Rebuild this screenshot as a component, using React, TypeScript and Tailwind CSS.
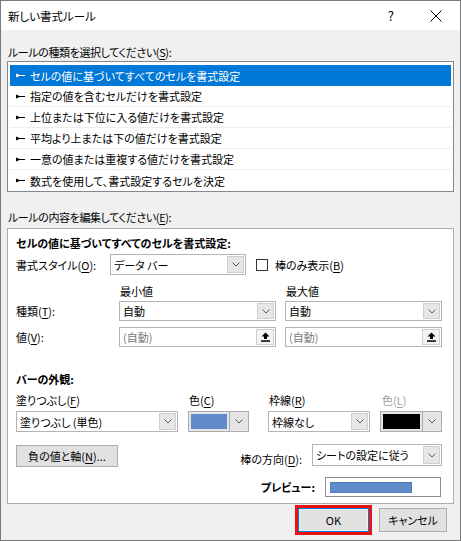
import type { ReactNode } from "react";

const rules = [
  "セルの値に基づいてすべてのセルを書式設定",
  "指定の値を含むセルだけを書式設定",
  "上位または下位に入る値だけを書式設定",
  "平均より上または下の値だけを書式設定",
  "一意の値または重複する値だけを書式設定",
  "数式を使用して、書式設定するセルを決定",
];

function Key({ k }: { k: string }) {
  return <span className="underline underline-offset-2">{k}</span>;
}

function Bullet({ white }: { white?: boolean }) {
  return (
    <svg width="9" height="5" viewBox="0 0 9 5" className="shrink-0">
      <path
        d="M0 0.5 L3.5 2 H9 V3 H3.5 L0 4.5 Z"
        fill={white ? "#ffffff" : "#000000"}
      />
    </svg>
  );
}

function Chevron() {
  return (
    <svg width="8" height="5" viewBox="0 0 8 5">
      <path d="M0.5 0.5 L4 4 L7.5 0.5" fill="none" stroke="#5a5a5a" strokeWidth="1" />
    </svg>
  );
}

function ArrowBox() {
  return (
    <div className="ml-auto my-[1px] mr-[1px] flex w-[17px] shrink-0 items-center justify-center border border-[#cfcfcf] bg-[#e6e6e6]">
      <Chevron />
    </div>
  );
}

function Dropdown({ w, h, children }: { w: string; h: string; children: ReactNode }) {
  return (
    <div className={`flex ${w} ${h} shrink-0 border border-[#b4b4b4] bg-white`}>
      <div className="flex items-center overflow-hidden whitespace-nowrap pl-[3px] leading-[16px]">
        {children}
      </div>
      <ArrowBox />
    </div>
  );
}

function ColorPick({ w, color }: { w: string; color: string }) {
  return (
    <div className={`flex ${w} h-[21px] shrink-0 border border-[#adadad] bg-[#e5e5e5]`}>
      <div className="flex-1 p-[2px]">
        <div className="h-full w-full" style={{ background: color }} />
      </div>
      <div className="flex w-[19px] items-center justify-center border-l border-[#adadad]">
        <Chevron />
      </div>
    </div>
  );
}

function RefInput() {
  return (
    <div className="flex h-[20px] w-[157px] shrink-0 border border-[#b4b4b4] bg-white">
      <div className="flex items-center pl-[3px] leading-[16px] text-[#7a7a7a]">(自動)</div>
      <div className="ml-auto my-[1px] mr-[1px] flex w-[18px] items-center justify-center border border-[#cfcfcf] bg-[#f3f3f3]">
        <svg width="9" height="10" viewBox="0 0 9 10">
          <path d="M4.5 0.5 L8.5 4.5 H6 V7 H3 V4.5 H0.5 Z" fill="#000" />
          <rect x="0" y="8.3" width="9" height="1.5" fill="#000" />
        </svg>
      </div>
    </div>
  );
}

export default function App() {
  return (
    <div className="flex h-[541px] w-[461px] flex-col border border-[#7a7a7a] bg-[#f0f0f0] text-[11px] leading-[16px] text-black [font-family:'Noto_Sans_CJK_JP',sans-serif] [font-feature-settings:'palt']">
      {/* Title bar */}
      <div className="flex h-[29px] shrink-0 items-center bg-white pl-[7px] pr-[18px]">
        <span className="pt-[1px] text-[11.5px]">新しい書式ルール</span>
        <span className="ml-auto text-[13px]">?</span>
        <svg width="12" height="12" viewBox="0 0 12 12" className="ml-[36px]">
          <path d="M0.5 0.5 L11.5 11.5 M11.5 0.5 L0.5 11.5" stroke="#000" strokeWidth="1" />
        </svg>
      </div>

      {/* Body */}
      <div className="flex flex-col px-[6px] pt-[14px]">
        <div className="pl-[1px] tracking-[-0.4px]">
          ルールの種類を選択してください(<Key k="S" />):
        </div>

        <div className="mt-[1px] h-[131px] border border-[#828790] bg-white px-[2px] pt-[3px]">
          {rules.map((r, i) => (
            <div
              key={r}
              className={`flex h-[21px] items-center gap-[5px] pl-[6px] ${
                i === 0
                  ? "bg-[#0078d7] text-white"
                  : i < rules.length - 1
                  ? "border-b border-[#ededed]"
                  : ""
              }`}
            >
              <Bullet white={i === 0} />
              <span>{r}</span>
            </div>
          ))}
        </div>

        <div className="mt-[17px] pl-[1px] tracking-[-0.4px]">
          ルールの内容を編集してください(<Key k="E" />):
        </div>

        {/* Edit panel */}
        <div className="mt-[3px] flex h-[276px] flex-col border border-[#adadad] bg-white pl-[8px] pt-[6px]">
          <div className="font-bold">セルの値に基づいてすべてのセルを書式設定:</div>

          <div className="mt-[3px] flex items-center">
            <span className="w-[94px] shrink-0">
              書式スタイル(<Key k="O" />):
            </span>
            <Dropdown w="w-[136px]" h="h-[21px]">
              データ バー
            </Dropdown>
            <div className="ml-[10px] h-[12px] w-[12px] shrink-0 border border-[#333333] bg-white" />
            <span className="ml-[7px]">
              棒のみ表示(<Key k="B" />)
            </span>
          </div>

          <div className="mt-[8px] flex pl-[104px]">
            <span className="w-[166px]">最小値</span>
            <span>最大値</span>
          </div>

          <div className="mt-[2px] flex items-center">
            <span className="w-[103px] shrink-0">
              種類(<Key k="T" />):
            </span>
            <Dropdown w="w-[157px]" h="h-[20px]">
              自動
            </Dropdown>
            <div className="ml-[9px]">
              <Dropdown w="w-[157px]" h="h-[20px]">
                自動
              </Dropdown>
            </div>
          </div>

          <div className="mt-[6px] flex items-center">
            <span className="w-[103px] shrink-0">
              値(<Key k="V" />):
            </span>
            <RefInput />
            <div className="ml-[9px]">
              <RefInput />
            </div>
          </div>

          <div className="mt-[24px] font-bold">バーの外観:</div>

          <div className="mt-[5px] flex">
            <span className="w-[173px] shrink-0">
              塗りつぶし(<Key k="F" />)
            </span>
            <span className="w-[80px] shrink-0">
              色(<Key k="C" />)
            </span>
            <span className="w-[113px] shrink-0">
              枠線(<Key k="R" />)
            </span>
            <span className="text-[#a0a0a0]">
              色(<Key k="L" />)
            </span>
          </div>

          <div className="mt-[3px] flex">
            <Dropdown w="w-[162px]" h="h-[21px]">
              塗りつぶし (単色)
            </Dropdown>
            <div className="ml-[10px]">
              <ColorPick w="w-[61px]" color="#608bcb" />
            </div>
            <div className="ml-[19px]">
              <Dropdown w="w-[102px]" h="h-[21px]">
                枠線なし
              </Dropdown>
            </div>
            <div className="ml-[10px]">
              <ColorPick w="w-[62px]" color="#000000" />
            </div>
          </div>

          <div className="mt-[13px] flex w-[426px] items-start">
            <button className="h-[22px] w-[102px] shrink-0 border border-[#adadad] bg-[#e1e1e1] leading-[16px]">
              負の値と軸(<Key k="N" />)...
            </button>
            <span className="ml-auto mt-[6px]">
              棒の方向(<Key k="D" />):
            </span>
            <div className="ml-[10px] mt-[-1px]">
              <Dropdown w="w-[130px]" h="h-[22px]">
                シートの設定に従う
              </Dropdown>
            </div>
          </div>

          <div className="mt-[10px] flex w-[425px] items-center justify-end">
            <span className="font-bold">プレビュー:</span>
            <div className="ml-[10px] flex h-[20px] w-[116px] items-center border border-[#8c8c8c] bg-white px-[4px]">
              <div className="h-[11px] w-[82px] border border-[#4f7dbd] bg-[#5f8bcb]" />
            </div>
          </div>
        </div>

        {/* Footer */}
        <div className="mt-[4px] flex justify-end gap-[10px] pr-[7px]">
          <button className="h-[24px] w-[71px] border border-[#0078d7] bg-[#e1e1e1] shadow-[inset_0_0_0_1px_#e5f1fb] outline-3 outline-[#ee1111]">
            OK
          </button>
          <button className="h-[24px] w-[68px] border border-[#adadad] bg-[#e1e1e1]">キャンセル</button>
        </div>
      </div>
    </div>
  );
}
